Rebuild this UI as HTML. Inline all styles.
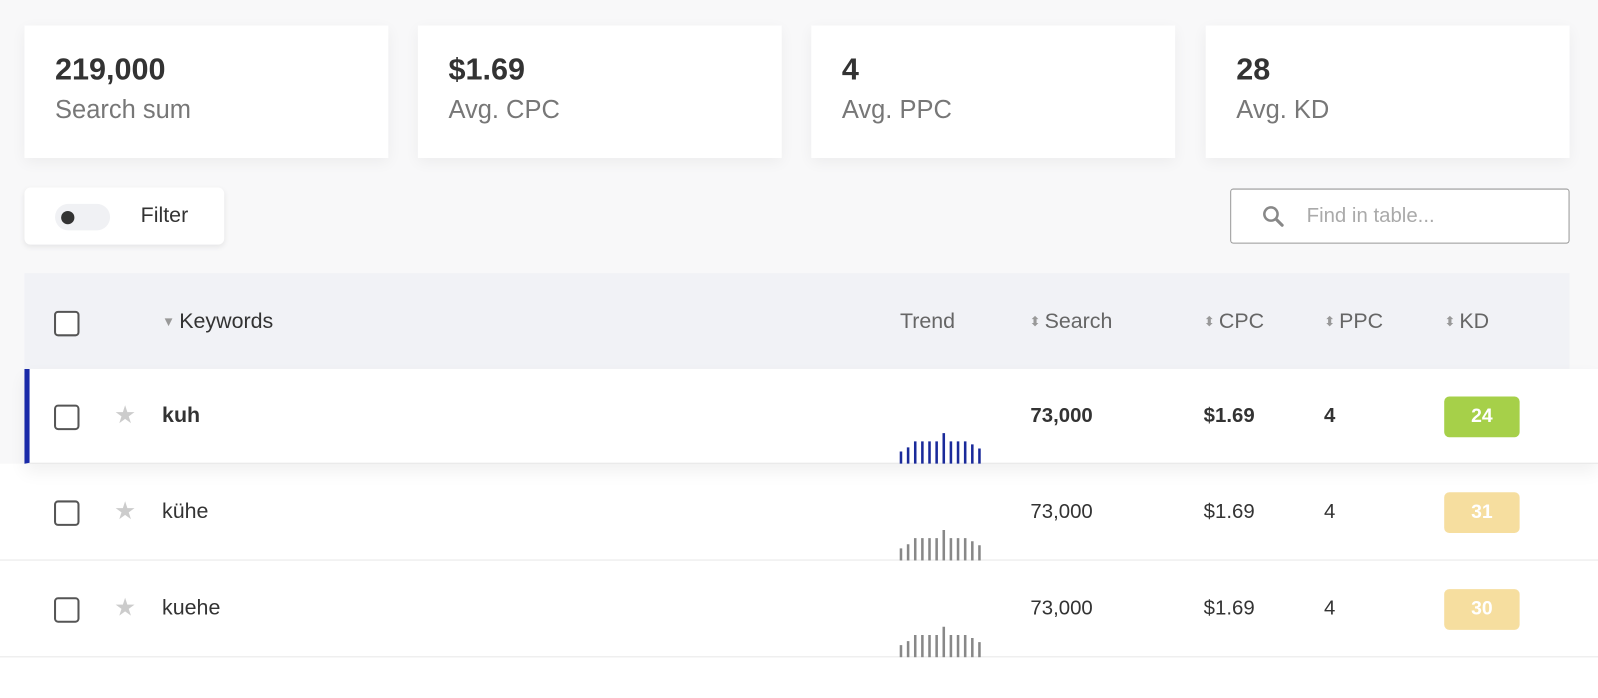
<!DOCTYPE html>
<html><head><meta charset="utf-8"><style>
*{margin:0;padding:0;box-sizing:border-box}
html,body{width:1598px;height:680px;overflow:hidden;background:#f8f8f9}
#w{position:absolute;left:0;top:0;width:1568px;height:668px;transform:scale(1.0192);transform-origin:0 0;font-family:"Liberation Sans",sans-serif;color:#333;background:#f8f8f9}
.card{position:absolute;top:25px;width:357px;height:130px;background:#fff;box-shadow:0 4px 14px rgba(0,0,0,.05)}
.card b{position:absolute;left:30px;top:27px;font-size:30px;color:#333}
.card span{position:absolute;left:30px;top:69px;font-size:25px;color:#777}
.filter{position:absolute;left:24px;top:184px;width:196px;height:56px;background:#fff;border-radius:6px;box-shadow:0 2px 6px rgba(0,0,0,.08)}
.tog{position:absolute;left:30px;top:16px;width:54px;height:26px;border-radius:13px;background:#f0f1f4}
.tog:after{content:"";position:absolute;left:6px;top:7px;width:13px;height:13px;border-radius:50%;background:#333}
.filter em{position:absolute;left:114px;top:16px;font-style:normal;font-size:21px;color:#333}
.search{position:absolute;left:1207px;top:185px;width:333px;height:54px;border:1.5px solid #999;border-radius:3px;background:#fff}
.search span{position:absolute;left:74px;top:15px;font-size:20px;color:#aaa}
.head{position:absolute;left:24px;top:268px;width:1516px;height:94px;background:#f1f2f6}
.t{position:absolute;font-size:21px}
.cb{position:absolute;left:53px;width:25px;height:25px;border:2px solid #555;border-radius:4px;background:#fff}
.row{position:absolute;left:0;width:1568px;background:#fff;border-bottom:1px solid #e6e6e6}
.kd{position:absolute;left:1417px;width:74px;height:40px;border-radius:5px;color:#fff;font-weight:bold;font-size:19px;text-align:center;line-height:40px}
.star{position:absolute;left:112px;font-size:24px;color:#ccc}
.h{color:#666}
.ar{font-size:13px;color:#999;vertical-align:2px;margin-right:4px}
</style></head><body><div id="w">
<div class="card" style="left:24px"><b>219,000</b><span>Search sum</span></div>
<div class="card" style="left:410px"><b>$1.69</b><span>Avg. CPC</span></div>
<div class="card" style="left:796px"><b>4</b><span>Avg. PPC</span></div>
<div class="card" style="left:1183px"><b>28</b><span>Avg. KD</span></div>
<div class="filter"><div class="tog"></div><em>Filter</em></div>
<div class="search"><svg style="position:absolute;left:30px;top:15px" width="22" height="22" viewBox="0 0 22 22"><circle cx="9" cy="9" r="6.5" fill="none" stroke="#888" stroke-width="2.5"/><path d="M14 14l6 6" stroke="#888" stroke-width="3" stroke-linecap="round"/></svg><span>Find in table...</span></div>
<div class="head"></div>
<div class="cb" style="top:305px"></div>
<div class="t" style="left:159px;top:304px"><span class="ar">▼</span>Keywords</div>
<div class="t h" style="left:883px;top:304px">Trend</div>
<div class="t h" style="left:1010px;top:304px"><span class="ar">⬍</span>Search</div>
<div class="t h" style="left:1181px;top:304px"><span class="ar">⬍</span>CPC</div>
<div class="t h" style="left:1299px;top:304px"><span class="ar">⬍</span>PPC</div>
<div class="t h" style="left:1417px;top:304px"><span class="ar">⬍</span>KD</div>

<div class="row" style="top:362px;height:93px;box-shadow:0 8px 16px rgba(0,0,0,.06);z-index:2;left:24px;width:1544px;border-left:5px solid #1a2aa8"></div>
<div class="row" style="top:455px;height:95px"></div>
<div class="row" style="top:550px;height:95px"></div>

<div style="position:absolute;z-index:3;left:0;top:362px;width:1568px;height:93px">
<div class="cb" style="top:35px"></div><div class="star" style="top:31px">★</div>
<div class="t" style="left:159px;top:34px;font-weight:bold">kuh</div>
<svg style="position:absolute;left:882px;top:59px" width="82" height="34"><path stroke="#1a2a9a" stroke-width="2.5" d="M2 34v-12M9 34v-16M16 34v-22M23 34v-22M30 34v-22M37 34v-22M44 34v-30M51 34v-22M58 34v-22M65 34v-22M72 34v-19M79 34v-15"/></svg>
<div class="t" style="left:1011px;top:35px;font-weight:bold;font-size:20px">73,000</div>
<div class="t" style="left:1181px;top:35px;font-weight:bold;font-size:20px">$1.69</div>
<div class="t" style="left:1299px;top:35px;font-weight:bold;font-size:20px">4</div>
<div class="kd" style="top:27px;background:#a6d049">24</div>
</div>

<div style="position:absolute;left:0;top:455px;width:1568px;height:95px">
<div class="cb" style="top:36px"></div><div class="star" style="top:32px">★</div>
<div class="t" style="left:159px;top:35px">kühe</div>
<svg style="position:absolute;left:882px;top:61px" width="82" height="34"><path stroke="#888" stroke-width="2.5" d="M2 34v-12M9 34v-16M16 34v-22M23 34v-22M30 34v-22M37 34v-22M44 34v-30M51 34v-22M58 34v-22M65 34v-22M72 34v-19M79 34v-15"/></svg>
<div class="t" style="left:1011px;top:36px;font-size:20px">73,000</div>
<div class="t" style="left:1181px;top:36px;font-size:20px">$1.69</div>
<div class="t" style="left:1299px;top:36px;font-size:20px">4</div>
<div class="kd" style="top:28px;background:#f6de9f">31</div>
</div>

<div style="position:absolute;left:0;top:550px;width:1568px;height:95px">
<div class="cb" style="top:36px"></div><div class="star" style="top:32px">★</div>
<div class="t" style="left:159px;top:35px">kuehe</div>
<svg style="position:absolute;left:882px;top:61px" width="82" height="34"><path stroke="#888" stroke-width="2.5" d="M2 34v-12M9 34v-16M16 34v-22M23 34v-22M30 34v-22M37 34v-22M44 34v-30M51 34v-22M58 34v-22M65 34v-22M72 34v-19M79 34v-15"/></svg>
<div class="t" style="left:1011px;top:36px;font-size:20px">73,000</div>
<div class="t" style="left:1181px;top:36px;font-size:20px">$1.69</div>
<div class="t" style="left:1299px;top:36px;font-size:20px">4</div>
<div class="kd" style="top:28px;background:#f6de9f">30</div>
</div>
<div class="row" style="top:645px;height:40px;border:0"></div>
</div></body></html>
